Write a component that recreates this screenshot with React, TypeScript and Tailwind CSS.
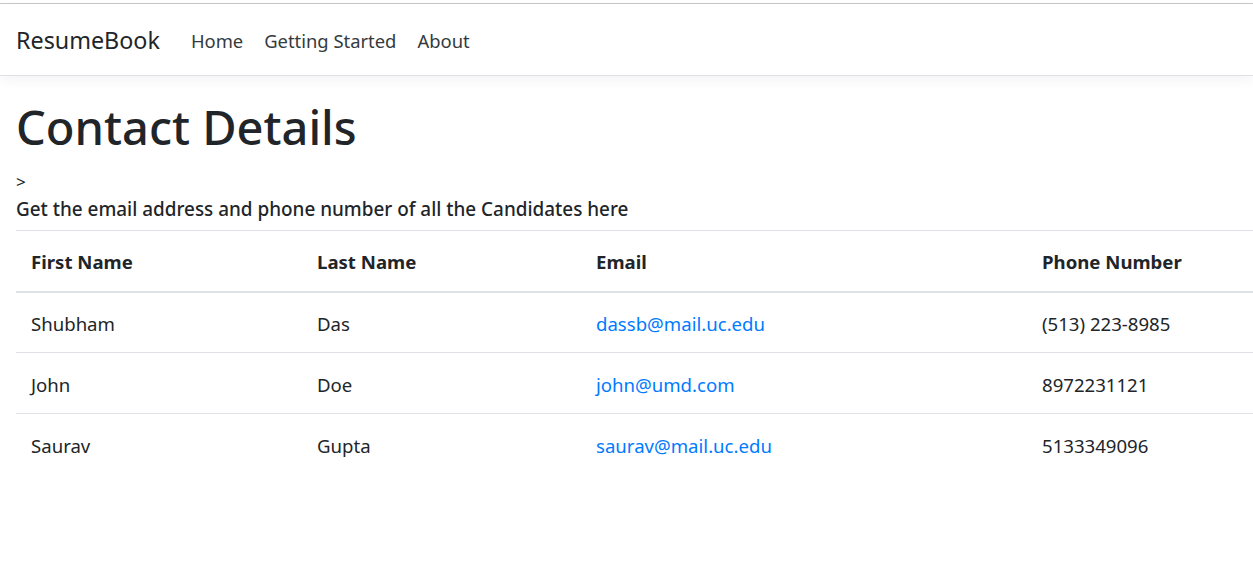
import React from "react";

const rows = [
  { first: "Shubham", last: "Das", email: "dassb@mail.uc.edu", phone: "(513) 223-8985" },
  { first: "John", last: "Doe", email: "john@umd.com", phone: "8972231121" },
  { first: "Saurav", last: "Gupta", email: "saurav@mail.uc.edu", phone: "5133349096" },
];

export default function App() {
  return (
    <div className="min-h-[582px] bg-white text-[#212529] overflow-hidden" style={{ fontFamily: '"Noto Sans", "Open Sans", sans-serif' }}>
      <div className="h-[3px] bg-white" />
      <div className="h-[1px] bg-[#c8c8c8]" />
      <nav className="h-[72px] pt-[2px] flex items-center px-4 border-b border-[#dee2e6] shadow-[0_4px_12px_rgba(0,0,0,0.05)] bg-white">
        <span className="text-[23.3px] text-[#212529] mr-[31px]">ResumeBook</span>
        <div className="flex gap-[21px] text-[18.4px] text-[#343a40]">
          <span>Home</span>
          <span>Getting Started</span>
          <span>About</span>
        </div>
      </nav>
      <main className="px-4">
        <h1 className="mt-[24px] text-[47px] leading-[54px] font-medium">Contact Details</h1>
        <div className="mt-[18px] text-[17px] leading-[20px]">&gt;</div>
        <div className="mt-[4px] text-[18.9px] leading-[26px] font-medium">Get the email address and phone number of all the Candidates here</div>
        <table className="mt-[8px] w-[1253px] border-collapse text-[18.6px]">
          <thead>
            <tr className="h-[61px] border-t border-[#dee2e6] border-b-2">
              <th className="w-[286px] text-left pl-[15px] pt-[3px] font-bold">First Name</th>
              <th className="w-[279px] text-left pl-[15px] pt-[3px] font-bold">Last Name</th>
              <th className="w-[446px] text-left pl-[15px] pt-[3px] font-bold">Email</th>
              <th className="text-left pl-[15px] pt-[3px] font-bold">Phone Number</th>
            </tr>
          </thead>
          <tbody>
            {rows.map((r) => (
              <tr key={r.first} className="h-[61px] border-t border-[#dee2e6]">
                <td className="pl-[15px] pt-[3px]">{r.first}</td>
                <td className="pl-[15px] pt-[3px]">{r.last}</td>
                <td className="pl-[15px] pt-[3px]"><a className="text-[#007bff]">{r.email}</a></td>
                <td className="pl-[15px] pt-[3px]">{r.phone}</td>
              </tr>
            ))}
          </tbody>
        </table>
      </main>
    </div>
  );
}
